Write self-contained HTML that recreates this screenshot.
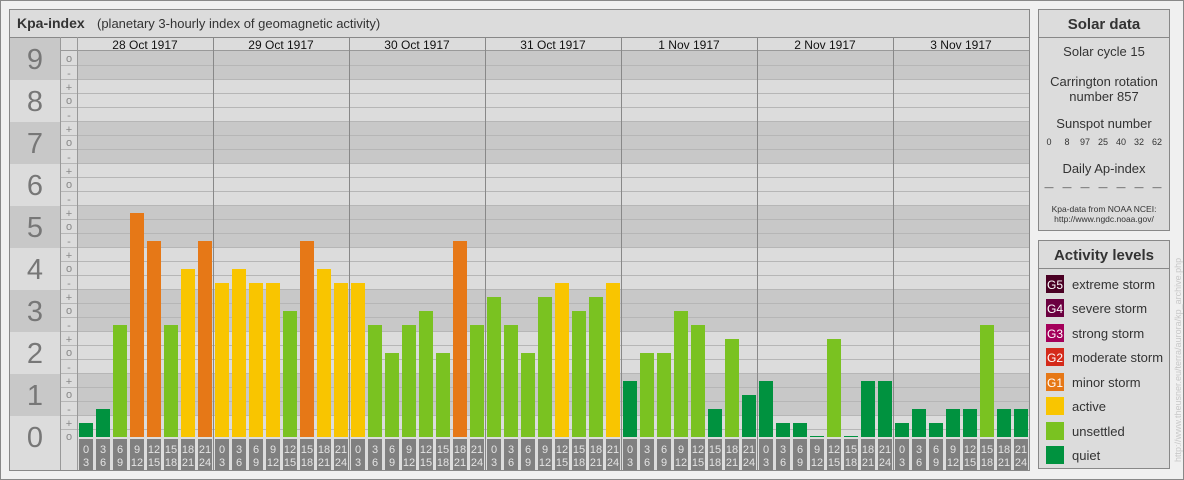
<!DOCTYPE html>
<html><head><meta charset="utf-8"><style>
html,body{margin:0;padding:0;background:#f0f0f0;}
svg{display:block;font-family:"Liberation Sans",Arial,sans-serif;}
</style></head><body>
<svg width="1184" height="480" viewBox="0 0 1184 480" xmlns="http://www.w3.org/2000/svg">
<defs>
<pattern id="lab" patternUnits="userSpaceOnUse" x="77" y="438" width="136" height="33">
<g fill="#808080">
<rect x="2" y="1" width="14" height="31"/><rect x="19" y="1" width="14" height="31"/><rect x="36" y="1" width="14" height="31"/><rect x="53" y="1" width="14" height="31"/><rect x="70" y="1" width="14" height="31"/><rect x="87" y="1" width="14" height="31"/><rect x="104" y="1" width="14" height="31"/><rect x="121" y="1" width="14" height="31"/>
</g>
<g fill="#e4e4e4" font-size="11" text-anchor="middle">
<text x="9" y="15">0</text><text x="9" y="28">3</text>
<text x="26" y="15">3</text><text x="26" y="28">6</text>
<text x="43" y="15">6</text><text x="43" y="28">9</text>
<text x="60" y="15">9</text><text x="60" y="28">12</text>
<text x="77" y="15">12</text><text x="77" y="28">15</text>
<text x="94" y="15">15</text><text x="94" y="28">18</text>
<text x="111" y="15">18</text><text x="111" y="28">21</text>
<text x="128" y="15">21</text><text x="128" y="28">24</text>
</g>
</pattern>
<pattern id="grid" patternUnits="userSpaceOnUse" x="0" y="9" width="10" height="14">
<rect x="0" y="0" width="10" height="1" fill="#b6b6b6"/>
</pattern>
</defs>
<rect x="0.5" y="0.5" width="1183" height="479" fill="#f0f0f0" stroke="#888"/>
<rect x="9.5" y="9.5" width="1020" height="461" fill="#dcdcdc" stroke="#888"/>
<line x1="10" y1="37.5" x2="1029" y2="37.5" stroke="#888"/>
<text x="17" y="28" font-size="14" font-weight="bold" fill="#333">Kpa-index</text>
<text x="97" y="28" font-size="13" fill="#333">(planetary 3-hourly index of geomagnetic activity)</text>
<g fill="#c8c8c8">
<rect x="10" y="38" width="50" height="42"/><rect x="10" y="122" width="50" height="42"/><rect x="10" y="206" width="50" height="42"/><rect x="10" y="290" width="50" height="42"/><rect x="10" y="374" width="50" height="42"/>
<rect x="77" y="51" width="952" height="29"/><rect x="77" y="122" width="952" height="42"/><rect x="77" y="206" width="952" height="42"/><rect x="77" y="290" width="952" height="42"/><rect x="77" y="374" width="952" height="42"/>
</g>
<rect x="60" y="64" width="969" height="373" fill="url(#grid)"/>
<line x1="60" y1="50.5" x2="1029" y2="50.5" stroke="#999"/>
<g fill="#777" font-size="29" text-anchor="middle">
<text x="35" y="69">9</text><text x="35" y="111">8</text><text x="35" y="153">7</text><text x="35" y="195">6</text><text x="35" y="237">5</text><text x="35" y="279">4</text><text x="35" y="321">3</text><text x="35" y="363">2</text><text x="35" y="405">1</text><text x="35" y="447">0</text>
</g>
<g fill="#888" font-size="11" text-anchor="middle">
<text x="69" y="440">o</text><text x="69" y="427">+</text><text x="69" y="413">-</text>
<text x="69" y="398">o</text><text x="69" y="385">+</text><text x="69" y="371">-</text>
<text x="69" y="356">o</text><text x="69" y="343">+</text><text x="69" y="329">-</text>
<text x="69" y="314">o</text><text x="69" y="301">+</text><text x="69" y="287">-</text>
<text x="69" y="272">o</text><text x="69" y="259">+</text><text x="69" y="245">-</text>
<text x="69" y="230">o</text><text x="69" y="217">+</text><text x="69" y="203">-</text>
<text x="69" y="188">o</text><text x="69" y="175">+</text><text x="69" y="161">-</text>
<text x="69" y="146">o</text><text x="69" y="133">+</text><text x="69" y="119">-</text>
<text x="69" y="104">o</text><text x="69" y="91">+</text><text x="69" y="77">-</text>
<text x="69" y="62">o</text>
</g>
<line x1="60.5" y1="37" x2="60.5" y2="470" stroke="#999"/>
<line x1="77.5" y1="37" x2="77.5" y2="470" stroke="#999"/>
<g stroke="#888">
<line x1="213.5" y1="37" x2="213.5" y2="470"/><line x1="349.5" y1="37" x2="349.5" y2="470"/><line x1="485.5" y1="37" x2="485.5" y2="470"/><line x1="621.5" y1="37" x2="621.5" y2="470"/><line x1="757.5" y1="37" x2="757.5" y2="470"/><line x1="893.5" y1="37" x2="893.5" y2="470"/>
</g>
<g font-size="12" fill="#111" text-anchor="middle">
<text x="145" y="49">28 Oct 1917</text><text x="281" y="49">29 Oct 1917</text><text x="417" y="49">30 Oct 1917</text><text x="553" y="49">31 Oct 1917</text><text x="689" y="49">1 Nov 1917</text><text x="825" y="49">2 Nov 1917</text><text x="961" y="49">3 Nov 1917</text>
</g>
<g>
<rect x="79" y="423" width="14" height="14" fill="#00923f"/>
<rect x="96" y="409" width="14" height="28" fill="#00923f"/>
<rect x="113" y="325" width="14" height="112" fill="#7ac221"/>
<rect x="130" y="213" width="14" height="224" fill="#e67817"/>
<rect x="147" y="241" width="14" height="196" fill="#e67817"/>
<rect x="164" y="325" width="14" height="112" fill="#7ac221"/>
<rect x="181" y="269" width="14" height="168" fill="#f9c500"/>
<rect x="198" y="241" width="14" height="196" fill="#e67817"/>
<rect x="215" y="283" width="14" height="154" fill="#f9c500"/>
<rect x="232" y="269" width="14" height="168" fill="#f9c500"/>
<rect x="249" y="283" width="14" height="154" fill="#f9c500"/>
<rect x="266" y="283" width="14" height="154" fill="#f9c500"/>
<rect x="283" y="311" width="14" height="126" fill="#7ac221"/>
<rect x="300" y="241" width="14" height="196" fill="#e67817"/>
<rect x="317" y="269" width="14" height="168" fill="#f9c500"/>
<rect x="334" y="283" width="14" height="154" fill="#f9c500"/>
<rect x="351" y="283" width="14" height="154" fill="#f9c500"/>
<rect x="368" y="325" width="14" height="112" fill="#7ac221"/>
<rect x="385" y="353" width="14" height="84" fill="#7ac221"/>
<rect x="402" y="325" width="14" height="112" fill="#7ac221"/>
<rect x="419" y="311" width="14" height="126" fill="#7ac221"/>
<rect x="436" y="353" width="14" height="84" fill="#7ac221"/>
<rect x="453" y="241" width="14" height="196" fill="#e67817"/>
<rect x="470" y="325" width="14" height="112" fill="#7ac221"/>
<rect x="487" y="297" width="14" height="140" fill="#7ac221"/>
<rect x="504" y="325" width="14" height="112" fill="#7ac221"/>
<rect x="521" y="353" width="14" height="84" fill="#7ac221"/>
<rect x="538" y="297" width="14" height="140" fill="#7ac221"/>
<rect x="555" y="283" width="14" height="154" fill="#f9c500"/>
<rect x="572" y="311" width="14" height="126" fill="#7ac221"/>
<rect x="589" y="297" width="14" height="140" fill="#7ac221"/>
<rect x="606" y="283" width="14" height="154" fill="#f9c500"/>
<rect x="623" y="381" width="14" height="56" fill="#00923f"/>
<rect x="640" y="353" width="14" height="84" fill="#7ac221"/>
<rect x="657" y="353" width="14" height="84" fill="#7ac221"/>
<rect x="674" y="311" width="14" height="126" fill="#7ac221"/>
<rect x="691" y="325" width="14" height="112" fill="#7ac221"/>
<rect x="708" y="409" width="14" height="28" fill="#00923f"/>
<rect x="725" y="339" width="14" height="98" fill="#7ac221"/>
<rect x="742" y="395" width="14" height="42" fill="#00923f"/>
<rect x="759" y="381" width="14" height="56" fill="#00923f"/>
<rect x="776" y="423" width="14" height="14" fill="#00923f"/>
<rect x="793" y="423" width="14" height="14" fill="#00923f"/>
<rect x="810" y="436" width="14" height="1" fill="#00923f"/>
<rect x="827" y="339" width="14" height="98" fill="#7ac221"/>
<rect x="844" y="436" width="14" height="1" fill="#00923f"/>
<rect x="861" y="381" width="14" height="56" fill="#00923f"/>
<rect x="878" y="381" width="14" height="56" fill="#00923f"/>
<rect x="895" y="423" width="14" height="14" fill="#00923f"/>
<rect x="912" y="409" width="14" height="28" fill="#00923f"/>
<rect x="929" y="423" width="14" height="14" fill="#00923f"/>
<rect x="946" y="409" width="14" height="28" fill="#00923f"/>
<rect x="963" y="409" width="14" height="28" fill="#00923f"/>
<rect x="980" y="325" width="14" height="112" fill="#7ac221"/>
<rect x="997" y="409" width="14" height="28" fill="#00923f"/>
<rect x="1014" y="409" width="14" height="28" fill="#00923f"/>
</g>
<rect x="77" y="438" width="952" height="33" fill="url(#lab)"/>
<rect x="1038.5" y="9.5" width="131" height="221" fill="#dcdcdc" stroke="#888"/>
<line x1="1039" y1="37.5" x2="1170" y2="37.5" stroke="#888"/>
<g text-anchor="middle" fill="#333">
<text x="1104" y="29" font-size="15" font-weight="bold">Solar data</text>
<text x="1104" y="56" font-size="13">Solar cycle 15</text>
<text x="1104" y="86" font-size="13">Carrington rotation</text>
<text x="1104" y="101" font-size="13">number 857</text>
<text x="1104" y="128" font-size="13">Sunspot number</text>
<g font-size="9"><text x="1049" y="145">0</text><text x="1067" y="145">8</text><text x="1085" y="145">97</text><text x="1103" y="145">25</text><text x="1121" y="145">40</text><text x="1139" y="145">32</text><text x="1157" y="145">62</text></g>
<text x="1104" y="173" font-size="13">Daily Ap-index</text>
<g font-size="9"><text x="1049" y="190">—</text><text x="1067" y="190">—</text><text x="1085" y="190">—</text><text x="1103" y="190">—</text><text x="1121" y="190">—</text><text x="1139" y="190">—</text><text x="1157" y="190">—</text></g>
<text x="1104" y="212" font-size="8.5">Kpa-data from NOAA NCEI:</text>
<text x="1104" y="222" font-size="8.5">http://www.ngdc.noaa.gov/</text>
</g>
<rect x="1038.5" y="240.5" width="131" height="228" fill="#dcdcdc" stroke="#888"/>
<line x1="1039" y1="268.5" x2="1170" y2="268.5" stroke="#888"/>
<text x="1104" y="260" font-size="15" font-weight="bold" fill="#333" text-anchor="middle">Activity levels</text>
<rect x="1046" y="275" width="18" height="18" fill="#4a0024"/>
<rect x="1046" y="299" width="18" height="18" fill="#6b0040"/>
<rect x="1046" y="324" width="18" height="18" fill="#a4005a"/>
<rect x="1046" y="348" width="18" height="18" fill="#d42a1a"/>
<rect x="1046" y="373" width="18" height="18" fill="#e67817"/>
<rect x="1046" y="397" width="18" height="18" fill="#f9c500"/>
<rect x="1046" y="422" width="18" height="18" fill="#7ac221"/>
<rect x="1046" y="446" width="18" height="18" fill="#00923f"/>
<g fill="#fff" font-size="12" text-anchor="middle">
<text x="1055" y="289">G5</text><text x="1055" y="313">G4</text><text x="1055" y="338">G3</text><text x="1055" y="362">G2</text><text x="1055" y="387">G1</text>
</g>
<g fill="#333" font-size="13">
<text x="1072" y="289">extreme storm</text>
<text x="1072" y="313">severe storm</text>
<text x="1072" y="338">strong storm</text>
<text x="1072" y="362">moderate storm</text>
<text x="1072" y="387">minor storm</text>
<text x="1072" y="411">active</text>
<text x="1072" y="436">unsettled</text>
<text x="1072" y="460">quiet</text>
</g>
<text transform="translate(1181,462) rotate(-90)" font-size="9" fill="#c8c8c8">http://www.theusner.eu/terra/aurora/kp_archive.php</text>
</svg>
</body></html>
